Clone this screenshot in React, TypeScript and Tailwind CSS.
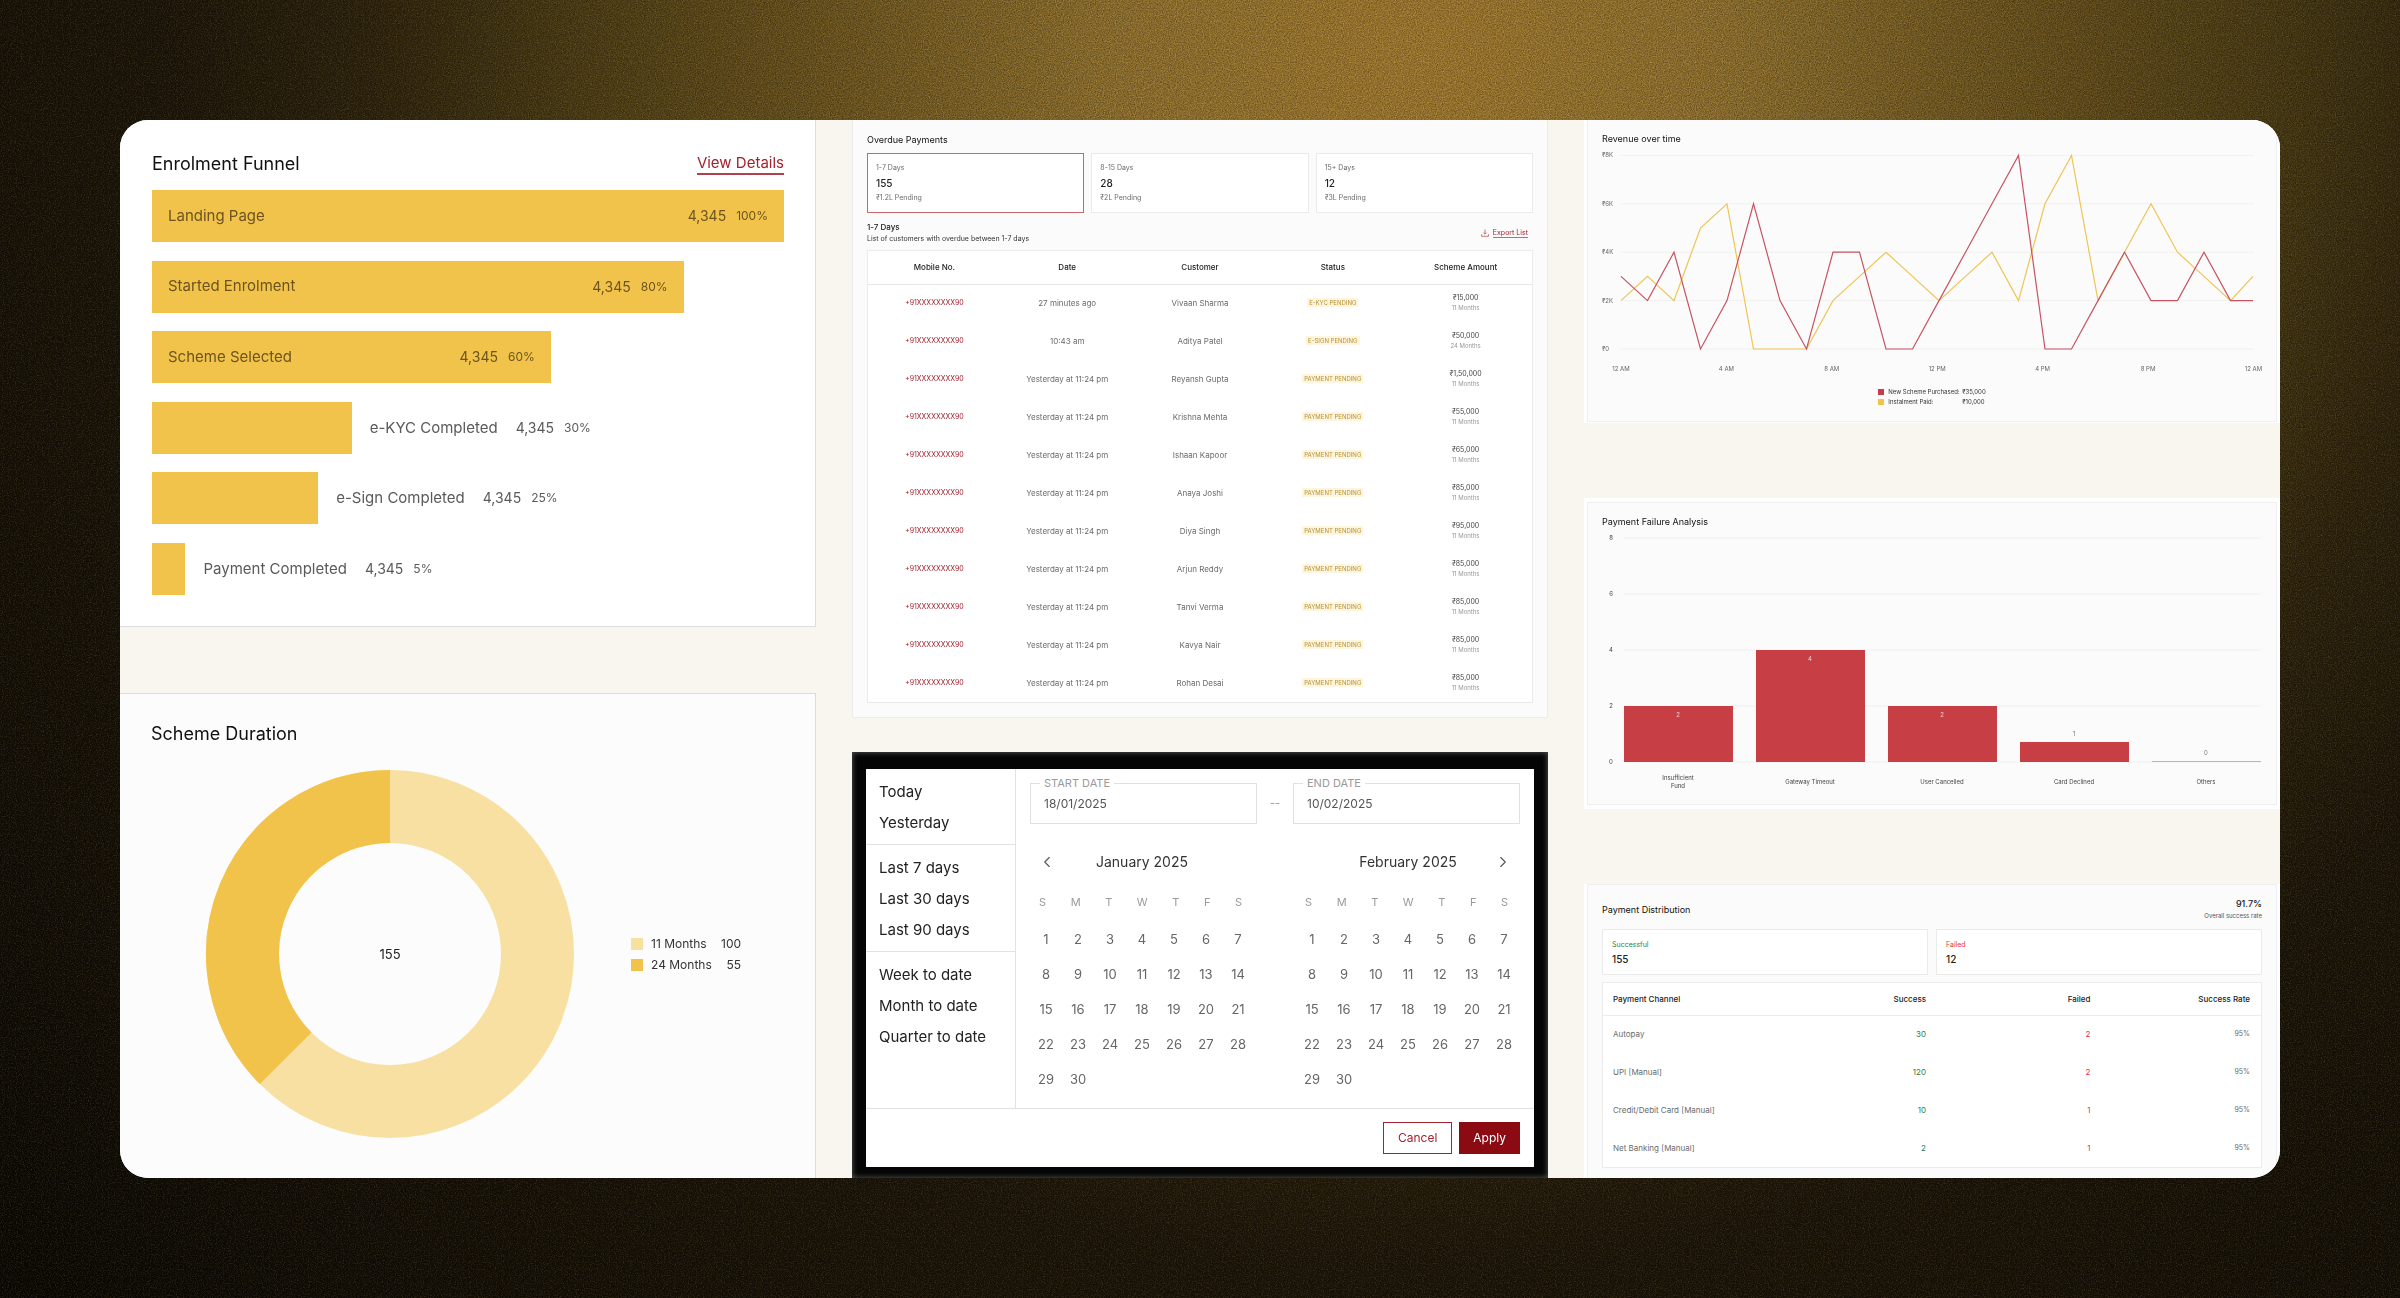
import { ChevronLeft, ChevronRight } from 'lucide-react';

const funnel = [
  { label: 'Landing Page', value: '4,345', pct: 100, width: 100 },
  { label: 'Started Enrolment', value: '4,345', pct: 80, width: 84.1 },
  { label: 'Scheme Selected', value: '4,345', pct: 60, width: 63.1 },
  { label: 'e-KYC Completed', value: '4,345', pct: 30, width: 31.6 },
  { label: 'e-Sign Completed', value: '4,345', pct: 25, width: 26.3 },
  { label: 'Payment Completed', value: '4,345', pct: 5, width: 5.3 },
];

const buckets = [
  { label: '1-7 Days', count: 155, pending: '₹1.2L Pending', active: true },
  { label: '8-15 Days', count: 28, pending: '₹2L Pending', active: false },
  { label: '15+ Days', count: 12, pending: '₹3L Pending', active: false },
];

const overdue = [
  { date: '27 minutes ago', name: 'Vivaan Sharma', status: 'E-KYC PENDING', amount: '₹15,000', months: 11 },
  { date: '10:43 am', name: 'Aditya Patel', status: 'E-SIGN PENDING', amount: '₹50,000', months: 24 },
  { date: 'Yesterday at 11:24 pm', name: 'Reyansh Gupta', status: 'PAYMENT PENDING', amount: '₹1,50,000', months: 11 },
  { date: 'Yesterday at 11:24 pm', name: 'Krishna Mehta', status: 'PAYMENT PENDING', amount: '₹55,000', months: 11 },
  { date: 'Yesterday at 11:24 pm', name: 'Ishaan Kapoor', status: 'PAYMENT PENDING', amount: '₹65,000', months: 11 },
  { date: 'Yesterday at 11:24 pm', name: 'Anaya Joshi', status: 'PAYMENT PENDING', amount: '₹85,000', months: 11 },
  { date: 'Yesterday at 11:24 pm', name: 'Diya Singh', status: 'PAYMENT PENDING', amount: '₹95,000', months: 11 },
  { date: 'Yesterday at 11:24 pm', name: 'Arjun Reddy', status: 'PAYMENT PENDING', amount: '₹85,000', months: 11 },
  { date: 'Yesterday at 11:24 pm', name: 'Tanvi Verma', status: 'PAYMENT PENDING', amount: '₹85,000', months: 11 },
  { date: 'Yesterday at 11:24 pm', name: 'Kavya Nair', status: 'PAYMENT PENDING', amount: '₹85,000', months: 11 },
  { date: 'Yesterday at 11:24 pm', name: 'Rohan Desai', status: 'PAYMENT PENDING', amount: '₹85,000', months: 11 },
];

const presets = [
  ['Today', 'Yesterday'],
  ['Last 7 days', 'Last 30 days', 'Last 90 days'],
  ['Week to date', 'Month to date', 'Quarter to date'],
];

const weekdays = ['S', 'M', 'T', 'W', 'T', 'F', 'S'];
const days = Array.from({ length: 30 }, (_, i) => i + 1);

const purchased = [3, 2, 4, 0, 2, 6, 2, 0, 4, 4, 0, 0, 2, 4, 6, 8, 0, 0, 2, 4, 2, 2, 4, 2, 2];
const instalments = [2, 3, 2, 5, 6, 0, 0, 0, 2, 3, 4, 3, 2, 3, 4, 2, 6, 8, 2, 4, 6, 4, 3, 2, 3];
const hours = ['12 AM', '4 AM', '8 AM', '12 PM', '4 PM', '8 PM', '12 AM'];

const failures = [
  { lines: ['Insufficient', 'Fund'], count: 2, height: 56 },
  { lines: ['Gateway Timeout'], count: 4, height: 112 },
  { lines: ['User Cancelled'], count: 2, height: 56 },
  { lines: ['Card Declined'], count: 1, height: 20 },
  { lines: ['Others'], count: 0, height: 1 },
];

const channels = [
  { name: 'Autopay', success: 30, failed: 2 },
  { name: 'UPI [Manual]', success: 120, failed: 2 },
  { name: 'Credit/Debit Card [Manual]', success: 10, failed: 1 },
  { name: 'Net Banking [Manual]', success: 2, failed: 1 },
];

function EnrolmentFunnel() {
  return (
    <section className="border-r border-b border-[#dcdcdc] bg-white pt-8 pr-[31px] pb-[31px] pl-8">
      <div className="flex items-center justify-between">
        <h2 className="text-lg leading-6 text-[#111]">Enrolment Funnel</h2>
        <a href="#funnel" className="border-b-2 border-[#b0404c] text-[15px] leading-5 text-[#a3222f]">View Details</a>
      </div>
      <div className="mt-[14px] flex h-[405px] flex-col justify-between">
        {funnel.map((step) => {
          const inside = step.pct >= 60;
          const text = (
            <>
              <span className="text-[15px]">{step.label}</span>
              <span className="flex items-center gap-[10px]">
                <span className="text-sm">{step.value}</span>
                <span className="text-xs">{step.pct}%</span>
              </span>
            </>
          );
          return (
            <div key={step.label} className="flex h-[52px] items-center gap-[18px] text-[#5a5a5a]">
              <div
                className="flex h-full shrink-0 items-center justify-between bg-[#f2c34a]"
                style={{ width: `${step.width}%` }}
              >
                {inside && <div className="flex w-full items-center justify-between px-4 text-[#6b5420]">{text}</div>}
              </div>
              {!inside && text}
            </div>
          );
        })}
      </div>
    </section>
  );
}

function SchemeDuration() {
  return (
    <section className="flex flex-1 flex-col border-t border-r border-[#dcdcdc] bg-[#fcfcfc] pt-7 pr-8 pl-[31px]">
      <h2 className="text-lg leading-6 text-[#111]">Scheme Duration</h2>
      <div className="mt-[23px] flex items-center gap-14 pl-[54px]">
        <svg viewBox="0 0 370 370" className="w-[370px]" role="img" aria-label="Scheme duration">
          <circle cx="185" cy="185" r="147.5" fill="none" stroke="#f8e0a2" strokeWidth="73" />
          <path d="M185 37.5 A147.5 147.5 0 0 0 80.7 289.3" fill="none" stroke="#f2c34a" strokeWidth="73" />
          <text x="185" y="190" textAnchor="middle" className="fill-[#222] text-[13px]">155</text>
        </svg>
        <ul className="flex flex-col gap-[5px] text-xs leading-4 whitespace-nowrap text-[#333]">
          <li className="flex items-center gap-2">
            <i className="size-3 bg-[#f8e0a2]" />
            <span className="w-[62px]">11 Months</span>
            <span className="w-5 text-right">100</span>
          </li>
          <li className="flex items-center gap-2">
            <i className="size-3 bg-[#f2c34a]" />
            <span className="w-[62px]">24 Months</span>
            <span className="w-5 text-right">55</span>
          </li>
        </ul>
      </div>
    </section>
  );
}

function DownloadIcon() {
  return (
    <svg viewBox="0 0 8 8" className="size-2" fill="none" stroke="#b0404c" strokeWidth="0.7">
      <path d="M4 0.5 V5 M2.4 3.6 L4 5.2 L5.6 3.6 M0.6 5.2 V7.3 H7.4 V5.2" />
    </svg>
  );
}

function OverduePayments() {
  return (
    <section className="border border-t-0 border-[#ededed] bg-[#fbfbfb] px-[14px] pt-[14px] pb-[14px]">
      <h2 className="text-[9px] leading-3 text-[#111]">Overdue Payments</h2>
      <div className="mt-[7px] grid grid-cols-3 gap-[7px]">
        {buckets.map((b) => (
          <button
            key={b.label}
            className={`flex h-[60px] flex-col justify-center gap-[3px] border bg-white px-2 text-left text-[7px] leading-3 text-[#6b6b6b] ${
              b.active ? 'border-[#c9666f]' : 'border-[#ebebeb]'
            }`}
          >
            <span>{b.label}</span>
            <span className="text-[10px] font-medium text-[#222]">{b.count}</span>
            <span>{b.pending}</span>
          </button>
        ))}
      </div>
      <div className="mt-2 flex items-center justify-between pr-[5px]">
        <div>
          <h3 className="text-[8px] leading-3 font-medium text-[#222]">1-7 Days</h3>
          <p className="text-[7px] leading-3 text-[#333]">List of customers with overdue between 1-7 days</p>
        </div>
        <a href="#export" className="flex items-center gap-1 text-[7px] leading-[9px] text-[#a3222f]">
          <DownloadIcon />
          <span className="border-b border-[#c9666f]">Export List</span>
        </a>
      </div>
      <div className="mt-[5px] border border-[#ebebeb] bg-white">
        <table className="w-full table-fixed text-center text-[8px] leading-[10px] text-[#6b6b6b]">
          <thead>
            <tr className="h-[33px] border-b border-[#e6e6e6] text-[#222]">
              {['Mobile No.', 'Date', 'Customer', 'Status', 'Scheme Amount'].map((h) => (
                <th key={h} className="font-medium">{h}</th>
              ))}
            </tr>
          </thead>
          <tbody>
            {overdue.map((row) => (
              <tr key={row.name} className="h-[38px]">
                <td className="text-[7px] text-[#a3222f]">+91XXXXXXXX90</td>
                <td>{row.date}</td>
                <td>{row.name}</td>
                <td className="text-[6px]">
                  <span className="bg-[#fdf5df] px-[2px] py-px text-[#b8922e]">{row.status}</span>
                </td>
                <td>
                  <div className="text-[7px] text-[#444]">{row.amount}</div>
                  <div className="text-[6px] text-[#999]">{row.months} Months</div>
                </td>
              </tr>
            ))}
          </tbody>
        </table>
      </div>
    </section>
  );
}

function DateField({ id, label, value }: { id: string; label: string; value: string }) {
  return (
    <div className="relative flex-1">
      <label htmlFor={id} className="absolute -top-[7px] left-[10px] bg-white px-1 text-[11px] leading-[14px] text-[#9a9a9a]">
        {label}
      </label>
      <input
        id={id}
        defaultValue={value}
        className="h-[41px] w-full border border-[#e0e0e0] bg-white px-[13px] text-xs text-[#555]"
      />
    </div>
  );
}

function Month({ title, side }: { title: string; side: 'left' | 'right' }) {
  return (
    <div className="w-[224px]">
      <div className="relative flex h-6 items-center justify-center">
        <h3 className="text-sm text-[#333]">{title}</h3>
        {side === 'left' ? (
          <button aria-label="Previous month" className="absolute left-2">
            <ChevronLeft size={18} strokeWidth={1.5} color="#555" />
          </button>
        ) : (
          <button aria-label="Next month" className="absolute right-2">
            <ChevronRight size={18} strokeWidth={1.5} color="#555" />
          </button>
        )}
      </div>
      <div className="mt-5 flex justify-between pr-3 pl-[9px] text-[11px] leading-4 text-[#9a9a9a]">
        {weekdays.map((d, i) => (
          <span key={i}>{d}</span>
        ))}
      </div>
      <div className="mt-3 grid auto-rows-[35px] grid-cols-7">
        {days.map((d) => (
          <button key={d} className="text-[13px] text-[#666]">{d}</button>
        ))}
      </div>
    </div>
  );
}

function DateRangePicker() {
  return (
    <section className="flex-1 bg-[#050505] px-[14px] pt-[17px] pb-[11px] shadow-[inset_0_0_5px_1px_#4a4a4a]">
      <div className="flex h-full flex-col bg-white">
        <div className="flex flex-1">
          <div className="w-[150px] border-r border-[#e2e2e2]">
            {presets.map((group, i) => (
              <div
                key={i}
                className={`flex flex-col items-start px-[13px] pt-[7px] pb-[6px] text-[15px] leading-[31px] text-[#222] ${
                  i > 0 ? 'border-t border-[#e2e2e2]' : ''
                }`}
              >
                {group.map((p) => (
                  <button key={p}>{p}</button>
                ))}
              </div>
            ))}
          </div>
          <div className="flex-1 px-[14px] pt-[14px]">
            <div className="flex items-center">
              <DateField id="start" label="START DATE" value="18/01/2025" />
              <span className="w-9 text-center text-[11px] text-[#999]">--</span>
              <DateField id="end" label="END DATE" value="10/02/2025" />
            </div>
            <div className="mt-[26px] flex justify-between">
              <Month title="January 2025" side="left" />
              <Month title="February 2025" side="right" />
            </div>
          </div>
        </div>
        <div className="flex h-[59px] items-center justify-end gap-[7px] border-t border-[#e2e2e2] px-[14px] text-xs">
          <button className="h-8 border border-[#a3222f] px-[14px] text-[#a3222f]">Cancel</button>
          <button className="h-8 bg-[#8c0a12] px-[14px] text-white">Apply</button>
        </div>
      </div>
    </section>
  );
}

function linePoints(values: number[]) {
  return values.map((v, i) => `${Math.min(19 + i * 26.5, 651)},${199 - v * 24.2}`).join(' ');
}

function RevenueChart() {
  return (
    <section className="bg-white px-[3px] pb-px">
      <div className="border border-t-0 border-[#eeeff1] bg-[#fbfbfb] px-[14px] pt-[13px] pb-[14px]">
        <h2 className="text-[9px] leading-3 text-[#111]">Revenue over time</h2>
        <svg viewBox="0 0 660 226" className="mt-[5px] w-full">
          {[0, 2, 4, 6, 8].map((v) => (
            <g key={v}>
              <line x1="19" x2="652" y1={199 - v * 24.2} y2={199 - v * 24.2} stroke="#f0f0f0" />
              <text x="0" y={201 - v * 24.2} className="fill-[#666] text-[6px]">{v === 0 ? '₹0' : `₹${v}K`}</text>
            </g>
          ))}
          {hours.map((h, i) => (
            <text key={i} x={19 + i * 105.4} y="221" textAnchor="middle" className="fill-[#666] text-[6px]">{h}</text>
          ))}
          <polyline points={linePoints(instalments)} fill="none" stroke="#eec453" strokeWidth="1.2" />
          <polyline points={linePoints(purchased)} fill="none" stroke="#c75360" strokeWidth="1.2" />
        </svg>
        <div className="mt-[11px] flex justify-center">
          <ul className="text-[6px] leading-[10px] whitespace-nowrap text-[#333]">
            <li className="flex items-center gap-1">
              <i className="size-[6px] bg-[#c73c46]" />
              <span className="w-[70px]">New Scheme Purchased:</span>
              <span>₹35,000</span>
            </li>
            <li className="flex items-center gap-1">
              <i className="size-[6px] bg-[#f2c34a]" />
              <span className="w-[70px]">Instalment Paid:</span>
              <span>₹10,000</span>
            </li>
          </ul>
        </div>
      </div>
    </section>
  );
}

function FailureChart() {
  return (
    <section className="bg-white px-[3px] py-1">
      <div className="border border-[#eeeff1] bg-[#fbfbfb] px-[14px] pt-[13px] pb-[10px]">
        <h2 className="text-[9px] leading-3 text-[#111]">Payment Failure Analysis</h2>
        <svg viewBox="0 0 660 262" className="mt-1 w-full">
          {[0, 2, 4, 6, 8].map((v) => (
            <g key={v}>
              <line x1="22" x2="659" y1={230 - v * 28} y2={230 - v * 28} stroke="#f0f0f0" />
              <text x="9" y={232 - v * 28} textAnchor="middle" className="fill-[#444] text-[6px]">{v}</text>
            </g>
          ))}
          {failures.map((f, i) => {
            const x = 22 + i * 132;
            const tall = f.height > 30;
            return (
              <g key={i} textAnchor="middle" className="text-[6px]">
                <rect x={x} y={230 - f.height} width="109" height={f.height} fill={f.count ? '#c73f44' : '#e0a5a8'} />
                <text x={x + 54} y={tall ? 241 - f.height : 224 - f.height} className={tall ? 'fill-[#f3cfd0]' : 'fill-[#777]'}>
                  {f.count}
                </text>
                {f.lines.map((line, n) => (
                  <text key={n} x={x + 54} y={252 + n * 8 - (f.lines.length - 1) * 4} className="fill-[#444]">{line}</text>
                ))}
              </g>
            );
          })}
        </svg>
      </div>
    </section>
  );
}

function PaymentDistribution() {
  return (
    <section className="flex-1 bg-white px-[3px]">
      <div className="h-full border border-b-0 border-[#eeeff1] bg-[#fbfbfb] px-[14px] pt-[13px]">
        <div className="flex items-center justify-between">
          <h2 className="text-[9px] leading-3 text-[#111]">Payment Distribution</h2>
          <div className="text-right">
            <div className="text-[9px] leading-3 font-medium text-[#222]">91.7%</div>
            <div className="text-[6px] leading-3 text-[#555]">Overall success rate</div>
          </div>
        </div>
        <div className="mt-[7px] grid grid-cols-2 gap-2">
          <div className="flex h-[46px] flex-col justify-center gap-[2px] border border-[#ebebeb] bg-white px-[9px]">
            <span className="text-[7px] leading-3 text-[#2f7d4a]">Successful</span>
            <span className="text-[10px] leading-3 font-medium text-[#222]">155</span>
          </div>
          <div className="flex h-[46px] flex-col justify-center gap-[2px] border border-[#ebebeb] bg-white px-[9px]">
            <span className="text-[7px] leading-3 text-[#e5343d]">Failed</span>
            <span className="text-[10px] leading-3 font-medium text-[#222]">12</span>
          </div>
        </div>
        <div className="mt-[7px] border border-[#ebebeb] bg-white">
          <table className="w-full table-fixed text-right text-[8px] leading-[10px] text-[#6b6b6b]">
            <thead>
              <tr className="h-8 border-b border-[#ececec] text-[#222]">
                <th className="w-1/4 pl-[10px] text-left font-medium">Payment Channel</th>
                <th className="w-1/4 pr-[6px] font-medium">Success</th>
                <th className="w-1/4 pr-[6px] font-medium">Failed</th>
                <th className="w-1/4 pr-[11px] font-medium">Success Rate</th>
              </tr>
            </thead>
            <tbody>
              {channels.map((c) => (
                <tr key={c.name} className="h-[38px]">
                  <td className="pl-[10px] text-left">{c.name}</td>
                  <td className="pr-[6px] text-[#2f7d4a]">{c.success}</td>
                  <td className="pr-[6px] text-[#e5343d]">{c.failed}</td>
                  <td className="pr-[11px] text-[7px]">95%</td>
                </tr>
              ))}
            </tbody>
          </table>
        </div>
      </div>
    </section>
  );
}

// Two passes: overlay roughens the lit area, screen lifts specks out of the dark one.
function Grain() {
  return (
    <>
      <svg className="absolute inset-0 size-full opacity-30 mix-blend-overlay" aria-hidden="true">
        <filter id="grain" colorInterpolationFilters="sRGB">
          <feTurbulence type="fractalNoise" baseFrequency="0.85" numOctaves="2" />
          <feColorMatrix values="1.4 0 0 0 -0.25 1.4 0 0 0 -0.25 1.4 0 0 0 -0.25 0 0 0 0 1" />
        </filter>
        <rect width="100%" height="100%" filter="url(#grain)" />
      </svg>
      <svg className="absolute inset-0 size-full opacity-40 mix-blend-screen" aria-hidden="true">
        <filter id="specks" colorInterpolationFilters="sRGB">
          <feTurbulence type="fractalNoise" baseFrequency="0.85" numOctaves="2" seed="4" />
          <feColorMatrix values="0.9 0 0 0 -0.42 0.8 0 0 0 -0.37 0.5 0 0 0 -0.23 0 0 0 0 1" />
        </filter>
        <rect width="100%" height="100%" filter="url(#specks)" />
      </svg>
    </>
  );
}

export default function App() {
  return (
    <main className="relative flex min-h-screen bg-[radial-gradient(64%_115%_at_59%_4%,#94702b_0%,#84672a_20%,#604a1a_40%,#433511_55%,#281e0a_68%,#171106_82%,#100b04_105%,#060402_130%)] p-[120px] font-[Inter,sans-serif]">
      <Grain />
      <div className="relative grid flex-1 grid-cols-3 gap-9 overflow-hidden rounded-[28px] bg-[#f9f6ef]">
        <div className="flex flex-col gap-[66px]">
          <EnrolmentFunnel />
          <SchemeDuration />
        </div>
        <div className="flex flex-col gap-[34px]">
          <OverduePayments />
          <DateRangePicker />
        </div>
        <div className="flex flex-col gap-[75px]">
          <RevenueChart />
          <FailureChart />
          <PaymentDistribution />
        </div>
      </div>
    </main>
  );
}
